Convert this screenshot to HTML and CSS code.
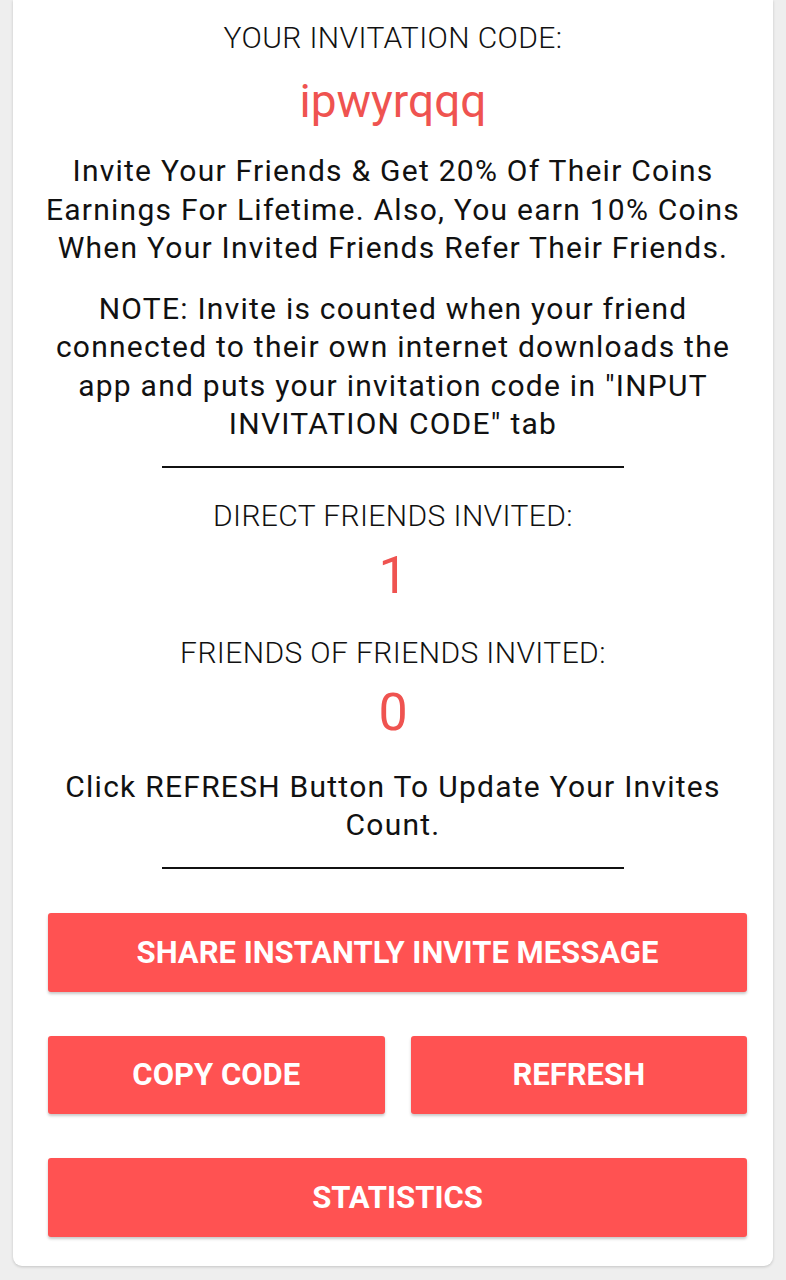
FILE: index.html
```html
<!DOCTYPE html>
<html>
<head>
<meta charset="utf-8">
<link rel="stylesheet" href="styles.css">
</head>
<body>
<div class="card">
  <div class="label label-top">YOUR INVITATION CODE:</div>
  <div class="code">ipwyrqqq</div>
  <p class="para para-first">Invite Your Friends &amp; Get 20% Of Their Coins Earnings For Lifetime. Also, You earn 10% Coins When Your Invited Friends Refer Their Friends.</p>
  <p class="para para-note">NOTE: Invite is counted when your friend connected to their own internet downloads the app and puts your invitation code in "INPUT INVITATION CODE" tab</p>
  <div class="divider divider-one"></div>
  <div class="label label-direct">DIRECT FRIENDS INVITED:</div>
  <div class="count">1</div>
  <div class="label label-fof">FRIENDS OF FRIENDS INVITED:</div>
  <div class="count">0</div>
  <p class="para para-click">Click REFRESH Button To Update Your Invites Count.</p>
  <div class="divider divider-two"></div>
  <div class="buttons">
    <div class="btn btn-wide">SHARE INSTANTLY INVITE MESSAGE</div>
    <div class="btn-row">
      <div class="btn">COPY CODE</div>
      <div class="btn">REFRESH</div>
    </div>
    <div class="btn btn-wide">STATISTICS</div>
  </div>
</div>
</body>
</html>
```

FILE: styles.css
```css
html, body {
  margin: 0;
  padding: 0;
  background: #eeeeee;
}
body {
  font-family: Roboto, "Liberation Sans", sans-serif;
  color: #111111;
  height: 1280px;
  overflow: hidden;
}
.card {
  margin-left: 13px;
  width: 760px;
  height: 1266px;
  box-sizing: border-box;
  background: #ffffff;
  border-radius: 0 0 9px 9px;
  box-shadow: 0 1px 3px rgba(0,0,0,0.18);
  padding-top: 18px;
  display: flex;
  flex-direction: column;
  align-items: center;
}
.card > * { flex-shrink: 0; }
.label {
  font-weight: 300;
  font-size: 30px;
  line-height: 40px;
  letter-spacing: 0.4px;
  text-align: center;
  color: #111;
}
.code {
  margin-top: 15px;
  font-size: 46px;
  line-height: 56px;
  color: #ef5350;
}
.para {
  margin: 0;
  font-size: 30px;
  line-height: 38.5px;
  letter-spacing: 1.25px;
  text-align: center;
  color: #111;
  width: 716px;
}
.para-first { margin-top: 23px; }
.para-note { margin-top: 22px; }
.divider {
  width: 462px;
  height: 2px;
  background: #111;
}
.divider-one { margin-top: 22px; }
.label-direct { margin-top: 28px; }
.count {
  margin-top: 10px;
  font-size: 52px;
  line-height: 60px;
  color: #ef5350;
}
.label-fof { margin-top: 27px; }
.para-click { margin-top: 25px; }
.divider-two { margin-top: 22px; }
.buttons {
  align-self: stretch;
  margin-top: 44px;
  padding: 0 26px 0 35px;
  display: flex;
  flex-direction: column;
  gap: 44px;
}
.btn-row {
  display: flex;
  gap: 26px;
}
.btn-row .btn { flex: 1; }
.btn {
  height: 78px;
  background: #ff5252;
  border-radius: 3px;
  box-shadow: 0 2px 3px rgba(0,0,0,0.22);
  color: #ffffff;
  font-weight: 700;
  font-size: 31px;
  display: flex;
  align-items: center;
  justify-content: center;
}
.btn-wide { height: 79px; }
```
